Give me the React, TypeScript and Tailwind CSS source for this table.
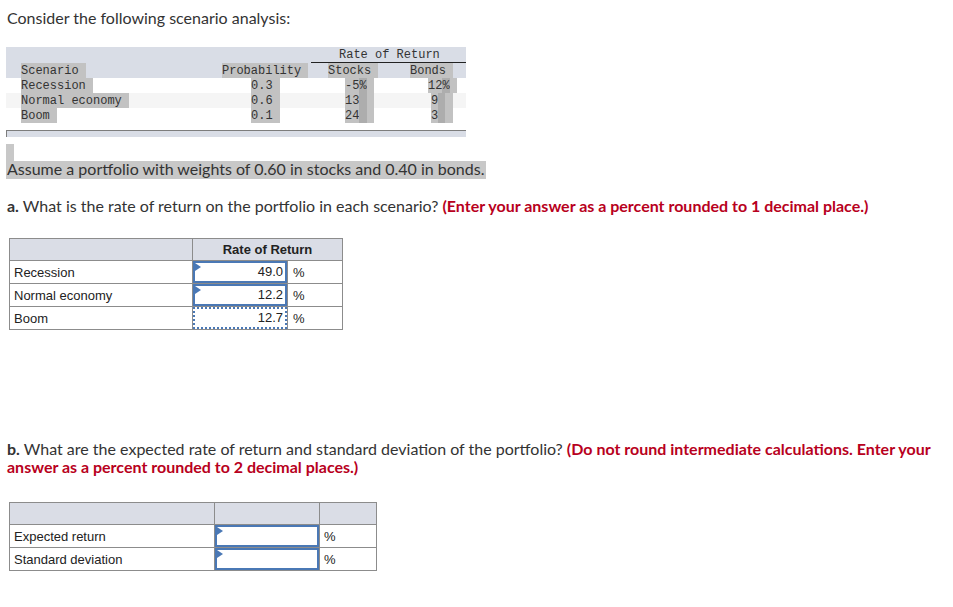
import type { ReactNode } from 'react';

const NB = '\u00a0';

function Hl({ children, dark }: { children: ReactNode; dark?: boolean }) {
  return (
    <span className={`inline-block h-[15px] leading-[17px] ${dark ? 'bg-[#adadad]' : 'bg-[#c2c2c2]'}`}>
      {children}
    </span>
  );
}

function ScenarioRow({
  name,
  prob,
  stock,
  bond,
  shaded,
}: {
  name: string;
  prob: string;
  stock: ReactNode;
  bond: ReactNode;
  shaded?: boolean;
}) {
  return (
    <div className={`flex h-[15px] ${shaded ? 'bg-[#f5f5f5]' : 'bg-white'}`}>
      <div className="w-[194px] pl-[15px]">
        <Hl>{name + NB}</Hl>
      </div>
      <div className="w-[122px] pl-[51px]">
        <Hl>{prob + NB}</Hl>
      </div>
      <div className="w-[78px] pl-[23px]">{stock}</div>
      <div className="w-[66px]">{bond}</div>
    </div>
  );
}

function AnswerInput({ value, dotted, flag = true }: { value?: string; dotted?: boolean; flag?: boolean }) {
  return (
    <div
      className={`relative h-[22px] border-2 ${
        dotted ? 'border-dotted' : 'border-solid'
      } border-[#4a78b5] bg-white pr-[2px] text-right leading-[18px]`}
    >
      {flag && (
        <span className="absolute left-0 top-0 h-0 w-0 border-y-[4px] border-l-[6px] border-y-transparent border-l-[#4a78b5]" />
      )}
      {value}
    </div>
  );
}

export default function App() {
  return (
    <div className="h-[607px] w-[953px] overflow-hidden bg-white font-['Lato',sans-serif] text-[16px] leading-[18px] text-[#333]">
      <p className="ml-[7px] pt-[9px]">Consider the following scenario analysis:</p>

      {/* scenario table */}
      <div className="ml-[6px] mt-[20px] w-[460px] font-['Liberation_Mono',monospace] text-[12px] leading-[15px] text-[#333]">
        <div className="bg-[#d9dde6]">
          <div className="flex h-[16px]">
            <div className="w-[305px]" />
            <div className="w-[155px] border-b border-[#222] pl-[28px] pt-[1px]">Rate of Return</div>
          </div>
          <div className="flex h-[15px]">
            <div className="w-[194px] pl-[15px]">
              <Hl>{'Scenario' + NB}</Hl>
            </div>
            <div className="w-[122px] pl-[22px]">
              <Hl>{'Probability' + NB}</Hl>
            </div>
            <div className="w-[78px] pl-[6px]">
              <Hl>{'Stocks' + NB}</Hl>
            </div>
            <div className="w-[66px] pl-[10px]">
              <Hl>{'Bonds' + NB}</Hl>
            </div>
          </div>
        </div>
        <ScenarioRow
          name="Recession"
          prob="0.3"
          stock={
            <>
              <Hl>-5</Hl>
              <Hl dark>%</Hl>
              <Hl>{NB}</Hl>
            </>
          }
          bond={
            <div className="pl-[28px]">
              <Hl>12</Hl>
              <Hl dark>%</Hl>
              <Hl>{NB}</Hl>
            </div>
          }
        />
        <ScenarioRow
          name="Normal economy"
          prob="0.6"
          shaded
          stock={
            <>
              <Hl>13</Hl>
              <Hl dark>{NB}</Hl>
              <Hl>{NB}</Hl>
            </>
          }
          bond={
            <div className="pl-[31px]">
              <Hl>9</Hl>
              <Hl dark>{NB}</Hl>
              <Hl>{NB}</Hl>
            </div>
          }
        />
        <ScenarioRow
          name="Boom"
          prob="0.1"
          stock={
            <>
              <Hl>24</Hl>
              <Hl dark>{NB}</Hl>
              <Hl>{NB}</Hl>
            </>
          }
          bond={
            <div className="pl-[31px]">
              <Hl>3</Hl>
              <Hl dark>{NB}</Hl>
              <Hl>{NB}</Hl>
            </div>
          }
        />
        <div className="mt-[7px] h-[7px] border-l border-t border-[#7d7d7d] bg-[#d9dde6]" />
      </div>

      <div className="ml-[6px] mt-[7px] h-[17px] w-[8px] bg-[#c8c8c8]" />
      <p className="ml-[6px] h-[18px] w-fit bg-[#c8c8c8] pl-[1px] pr-[2px] pt-[1px] leading-[14px]">
        Assume a portfolio with weights of 0.60 in stocks and 0.40 in bonds.
      </p>

      <p className="ml-[7px] mt-[18px]">
        <span className="font-bold">a.</span> What is the rate of return on the portfolio in each scenario?{' '}
        <span className="font-bold text-[#b80020]">(Enter your answer as a percent rounded to 1 decimal place.)</span>
      </p>

      {/* part a table */}
      <table className="ml-[9px] mt-[23px] border-collapse font-['Liberation_Sans',Arial,sans-serif] text-[13px] leading-[21px] text-[#222]">
        <thead>
          <tr className="h-[22px] bg-[#dadde6]">
            <th className="w-[183px] border border-[#8c8c8c]" />
            <th colSpan={2} className="border border-[#8c8c8c] text-center font-bold">
              Rate of Return
            </th>
          </tr>
        </thead>
        <tbody>
          {[
            { name: 'Recession', value: '49.0' },
            { name: 'Normal economy', value: '12.2' },
            { name: 'Boom', value: '12.7', dotted: true },
          ].map((row) => (
            <tr key={row.name} className="h-[22px]">
              <td className="border border-[#8c8c8c] pl-[4px] text-left">{row.name}</td>
              <td className="w-[95px] border border-[#8c8c8c] p-0">
                <AnswerInput value={row.value} dotted={row.dotted} flag={!row.dotted} />
              </td>
              <td className="w-[55px] border border-[#8c8c8c] pl-[5px]">%</td>
            </tr>
          ))}
        </tbody>
      </table>

      <p className="ml-[7px] mt-[110px] w-[935px]">
        <span className="font-bold">b.</span> What are the expected rate of return and standard deviation of the
        portfolio?{' '}
        <span className="font-bold text-[#b80020]">
          (Do not round intermediate calculations. Enter your answer as a percent rounded to 2 decimal places.)
        </span>
      </p>

      {/* part b table */}
      <table className="ml-[9px] mt-[26px] border-collapse font-['Liberation_Sans',Arial,sans-serif] text-[13px] leading-[21px] text-[#222]">
        <thead>
          <tr className="h-[22px] bg-[#dadde6]">
            <th className="w-[205px] border border-[#8c8c8c]" />
            <th className="w-[105px] border border-[#8c8c8c]" />
            <th className="w-[57px] border border-[#8c8c8c]" />
          </tr>
        </thead>
        <tbody>
          {['Expected return', 'Standard deviation'].map((name) => (
            <tr key={name} className="h-[22px]">
              <td className="border border-[#8c8c8c] pl-[4px]">{name}</td>
              <td className="border border-[#8c8c8c] p-0">
                <AnswerInput />
              </td>
              <td className="border border-[#8c8c8c] pl-[4px]">%</td>
            </tr>
          ))}
        </tbody>
      </table>
    </div>
  );
}
